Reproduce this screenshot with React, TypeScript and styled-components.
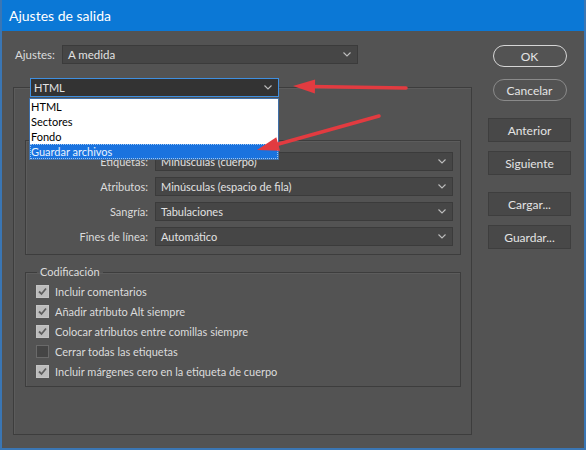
import React from "react";
import styled, { createGlobalStyle, css } from "styled-components";

const GlobalStyle = createGlobalStyle`
  html, body {
    margin: 0;
    padding: 0;
    background: #535353;
  }
  * {
    box-sizing: border-box;
  }
`;

const Window = styled.div`
  position: relative;
  width: 586px;
  height: 450px;
  display: flex;
  flex-direction: column;
  background: #535353;
  border: 2px solid #3a76b4;
  border-top: none;
  font-family: Lato, "Noto Sans", sans-serif;
  font-size: 11px;
  color: #dcdcdc;
  overflow: hidden;
`;

const TitleBar = styled.div`
  height: 31px;
  margin: 0 -2px;
  padding-left: 9px;
  display: flex;
  align-items: center;
  background: #0b78d6;
  color: #ffffff;
  font-size: 14px;
`;

const Body = styled.div`
  flex: 1;
  display: flex;
  padding: 14px 13px 13px 11px;
  gap: 16px;
`;

const LeftColumn = styled.div`
  width: 459px;
  display: flex;
  flex-direction: column;
`;

const SettingsRow = styled.div`
  display: flex;
  align-items: center;
  height: 19px;
  padding-left: 2px;
  gap: 7px;
  font-size: 11.5px;
`;

const Field = styled.div<{ width: number; focused?: boolean }>`
  width: ${(p) => p.width}px;
  height: 19px;
  display: flex;
  align-items: center;
  justify-content: space-between;
  padding: 0 6px 0 5px;
  background: #464646;
  border: 1px solid #3b3b3b;
  color: #e2e2e2;
  ${(p) =>
    p.focused &&
    css`
      background: #333333;
      border-color: #3f8fe0;
      padding-left: 3px;
    `}
`;

const Group = styled.fieldset<{ grow?: boolean }>`
  margin: 0;
  padding: 0 10px 0 11px;
  border: 1px solid #3d3d3d;
  box-shadow: inset 1px 1px 0 #5c5c5c;
  min-width: 0;
  ${(p) =>
    p.grow &&
    css`
      flex: 1;
      margin-top: 14px;
    `}
`;

const SelectLegend = styled.legend`
  position: relative;
  margin-left: 5px;
  padding: 0;
`;

const TextLegend = styled.legend`
  margin-left: 1px;
  padding: 0 3px;
  line-height: 14px;
  color: #dcdcdc;
`;

const OptionsBox = styled.div`
  margin-top: 43px;
  padding: 11px 8px 8px 0;
  border: 1px solid #3d3d3d;
  box-shadow: inset 1px 1px 0 #5c5c5c;
  display: grid;
  grid-template-columns: 122px 298px;
  column-gap: 7px;
  row-gap: 6px;
  align-items: center;
`;

const RowLabel = styled.div`
  text-align: right;
`;

const CodingGroup = styled(Group)`
  margin-top: 10px;
  padding: 2px 10px 5px 10px;
`;

const CheckRow = styled.label`
  display: flex;
  align-items: center;
  height: 20px;
  gap: 6px;
`;

const Box = styled.span<{ checked: boolean }>`
  width: 13px;
  height: 13px;
  display: flex;
  align-items: center;
  justify-content: center;
  border: 1px solid ${(p) => (p.checked ? "#c4c4c4" : "#6a6a6a")};
  background: ${(p) => (p.checked ? "#bcbcbc" : "#454545")};
`;

const DropList = styled.div`
  position: absolute;
  top: 20px;
  left: -1px;
  width: 250px;
  background: #ffffff;
  border: 1px solid #3f6fa8;
  color: #000000;
  font-size: 11px;
  z-index: 2;
`;

const DropItem = styled.div<{ active?: boolean }>`
  height: 15px;
  line-height: 15px;
  padding-left: 1px;
  ${(p) =>
    p.active &&
    css`
      background: #1a73df;
      color: #e8f4ff;
      outline: 1px dotted #9cc6f2;
      outline-offset: -1px;
    `}
`;

const RightColumn = styled.div`
  width: 83px;
  display: flex;
  flex-direction: column;
  align-items: center;
`;

const PillButton = styled.button<{ primary?: boolean; gap: number }>`
  width: 74px;
  height: 22px;
  margin-top: ${(p) => p.gap}px;
  border-radius: 11px;
  border: 1px solid ${(p) => (p.primary ? "#d6d6d6" : "#8a8a8a")};
  background: transparent;
  color: #e4e4e4;
  font-family: inherit;
  font-size: 12px;
  padding: 0;
`;

const FlatButton = styled.button<{ gap: number }>`
  width: 83px;
  height: 24px;
  margin-top: ${(p) => p.gap}px;
  border: 1px solid #3e3e3e;
  background: #484848;
  color: #e4e4e4;
  font-family: inherit;
  font-size: 12px;
  padding: 0;
`;

const Overlay = styled.svg`
  position: absolute;
  top: -2px;
  left: -2px;
  pointer-events: none;
  z-index: 3;
`;

const Chevron = () => (
  <svg width="8" height="5" viewBox="0 0 8 5">
    <polyline points="0.5,0.5 4,4 7.5,0.5" fill="none" stroke="#bdbdbd" strokeWidth="1.1" />
  </svg>
);

const Check = () => (
  <svg width="11" height="11" viewBox="0 0 11 11">
    <polyline points="2,5.5 4.5,8 9,2.5" fill="none" stroke="#5e5e5e" strokeWidth="1.8" />
  </svg>
);

const options = [
  { label: "Etiquetas:", value: "Minúsculas (cuerpo)" },
  { label: "Atributos:", value: "Minúsculas (espacio de fila)" },
  { label: "Sangría:", value: "Tabulaciones" },
  { label: "Fines de línea:", value: "Automático" },
];

const checks = [
  { text: "Incluir comentarios", checked: true },
  { text: "Añadir atributo Alt siempre", checked: true },
  { text: "Colocar atributos entre comillas siempre", checked: true },
  { text: "Cerrar todas las etiquetas", checked: false },
  { text: "Incluir márgenes cero en la etiqueta de cuerpo", checked: true },
];

const items = ["HTML", "Sectores", "Fondo", "Guardar archivos"];

function arrowHead(tx: number, ty: number, fx: number, fy: number, len: number, half: number) {
  const dx = tx - fx;
  const dy = ty - fy;
  const d = Math.hypot(dx, dy);
  const ux = dx / d;
  const uy = dy / d;
  const bx = tx - ux * len;
  const by = ty - uy * len;
  return `${tx},${ty} ${bx - uy * half},${by + ux * half} ${bx + uy * half},${by - ux * half}`;
}

export default function App() {
  return (
    <>
      <GlobalStyle />
      <Window>
        <TitleBar>Ajustes de salida</TitleBar>
        <Body>
          <LeftColumn>
            <SettingsRow>
              <span>Ajustes:</span>
              <Field width={296}>
                <span>A medida</span>
                <Chevron />
              </Field>
            </SettingsRow>
            <Group grow>
              <SelectLegend>
                <Field width={249} focused>
                  <span>HTML</span>
                  <Chevron />
                </Field>
                <DropList>
                  {items.map((it, i) => (
                    <DropItem key={it} active={i === items.length - 1}>
                      {it}
                    </DropItem>
                  ))}
                </DropList>
              </SelectLegend>
              <OptionsBox>
                {options.map((o) => (
                  <React.Fragment key={o.label}>
                    <RowLabel>{o.label}</RowLabel>
                    <Field width={298}>
                      <span>{o.value}</span>
                      <Chevron />
                    </Field>
                  </React.Fragment>
                ))}
              </OptionsBox>
              <CodingGroup>
                <TextLegend>Codificación</TextLegend>
                {checks.map((c) => (
                  <CheckRow key={c.text}>
                    <Box checked={c.checked}>{c.checked && <Check />}</Box>
                    <span>{c.text}</span>
                  </CheckRow>
                ))}
              </CodingGroup>
            </Group>
          </LeftColumn>
          <RightColumn>
            <PillButton primary gap={0}>OK</PillButton>
            <PillButton gap={12}>Cancelar</PillButton>
            <FlatButton gap={17}>Anterior</FlatButton>
            <FlatButton gap={9}>Siguiente</FlatButton>
            <FlatButton gap={17}>Cargar...</FlatButton>
            <FlatButton gap={9}>Guardar...</FlatButton>
          </RightColumn>
        </Body>
        <Overlay width="586" height="450" viewBox="0 0 586 450">
          <line x1="406" y1="90" x2="310" y2="88.5" stroke="#e23b40" strokeWidth="3.5" strokeLinecap="round" />
          <polygon points={arrowHead(293, 88, 406, 90, 22, 7)} fill="#e23b40" />
          <line x1="379" y1="118" x2="275" y2="147" stroke="#e23b40" strokeWidth="3.5" strokeLinecap="round" />
          <polygon points={arrowHead(257, 152, 379, 118, 22, 7)} fill="#e23b40" />
        </Overlay>
      </Window>
    </>
  );
}
